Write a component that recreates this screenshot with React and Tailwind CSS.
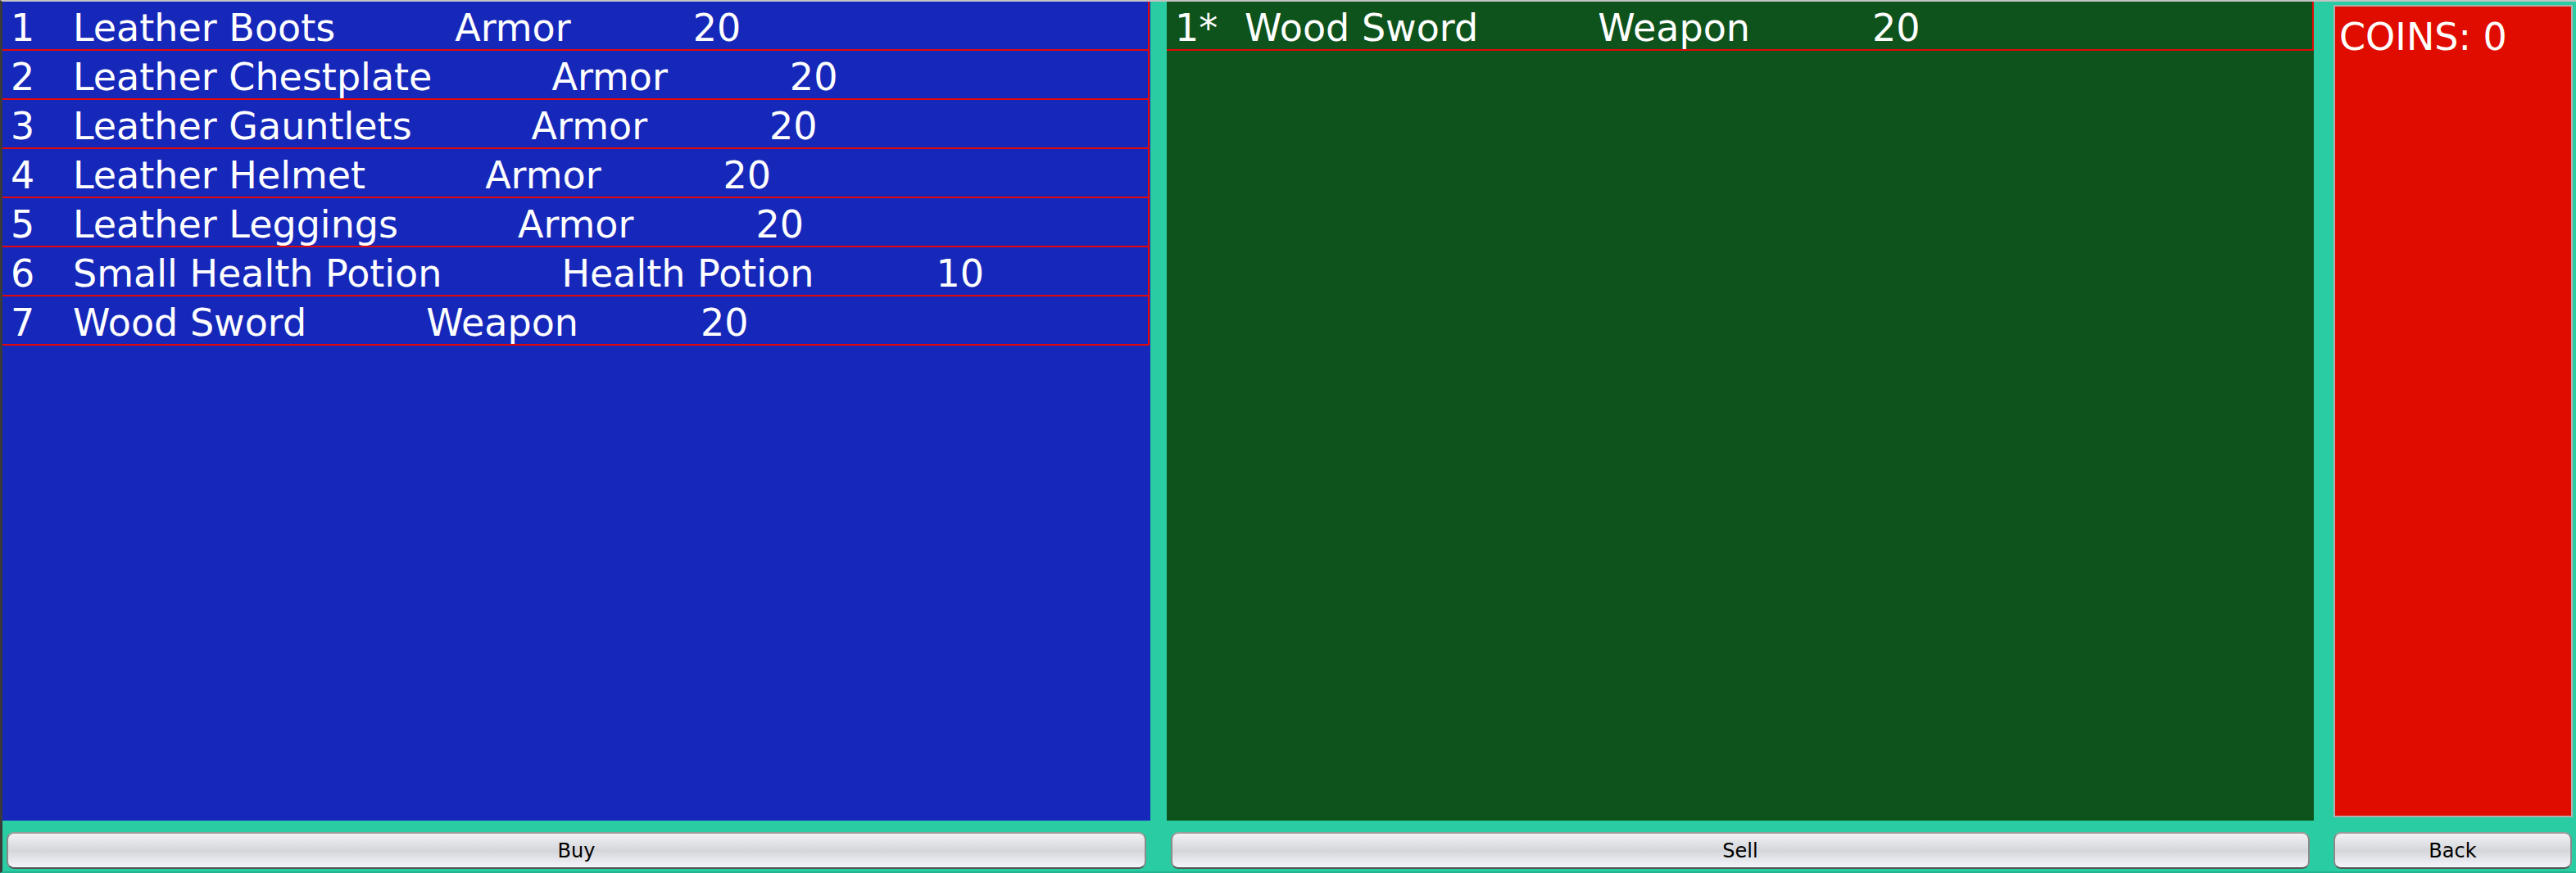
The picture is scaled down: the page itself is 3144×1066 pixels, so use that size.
import React from 'react';

const shopItems = [
  { id: 1, name: 'Leather Boots', type: 'Armor', price: 20 },
  { id: 2, name: 'Leather Chestplate', type: 'Armor', price: 20 },
  { id: 3, name: 'Leather Gauntlets', type: 'Armor', price: 20 },
  { id: 4, name: 'Leather Helmet', type: 'Armor', price: 20 },
  { id: 5, name: 'Leather Leggings', type: 'Armor', price: 20 },
  { id: 6, name: 'Small Health Potion', type: 'Health Potion', price: 10 },
  { id: 7, name: 'Wood Sword', type: 'Weapon', price: 20 },
];

const inventory = [{ id: '1*', name: 'Wood Sword', type: 'Weapon', price: 20 }];

function ItemRow({ item, numWidth }) {
  return (
    <div className="flex h-[60px] border-b-2 border-r-2 border-[#e30808] pl-[10px] pt-[7px] text-[46px] leading-[51px] text-white whitespace-nowrap">
      <span className={numWidth}>{item.id}</span>
      <span>{item.name}</span>
      <span className="ml-[146px]">{item.type}</span>
      <span className="ml-[149px]">{item.price}</span>
    </div>
  );
}

function MacButton({ label, className }) {
  return (
    <button className={`h-[45px] rounded-[9px] border-2 border-t-[#9c9c9c] border-x-[#8a8a8a] border-b-[#555] bg-gradient-to-b from-[#f2f2f5] via-[#d4d6da] to-[#f4f5fb] text-[24px] text-black ${className}`}>
      {label}
    </button>
  );
}

export default function App() {
  return (
    <div
      className="w-[3144px] h-[1066px] bg-[#2acda3] border-t-2 border-t-[#c4c4c4] border-l-[3px] border-l-[#3a3a3a] border-b-2 border-b-[#21b48e] flex flex-col overflow-hidden"
      style={{ fontFamily: '"DejaVu Sans", "Liberation Sans", sans-serif' }}
    >
      <div className="flex h-[1000px]">
        <div className="w-[1401px] bg-[#1628ba] pr-[1px]">
          {shopItems.map((it) => (
            <ItemRow key={it.id} item={it} numWidth="w-[76px]" />
          ))}
        </div>
        <div className="ml-[20px] w-[1400px] bg-[#0f531c]">
          {inventory.map((it) => (
            <ItemRow key={it.id} item={it} numWidth="w-[85px]" />
          ))}
        </div>
        <div className="ml-[24px] w-[292px] pt-[4px] pb-[4px]">
          <div className="h-full border-2 border-[#b0b0b0] bg-[#e10c00] pl-[5px] pt-[12px] text-[46px] leading-[51px] text-white whitespace-nowrap">
            COINS: 0
          </div>
        </div>
      </div>
      <div className="flex pt-[14px]">
        <MacButton label="Buy" className="ml-[5px] w-[1391px]" />
        <MacButton label="Sell" className="ml-[30px] w-[1390px]" />
        <MacButton label="Back" className="ml-[29px] w-[291px]" />
      </div>
    </div>
  );
}
